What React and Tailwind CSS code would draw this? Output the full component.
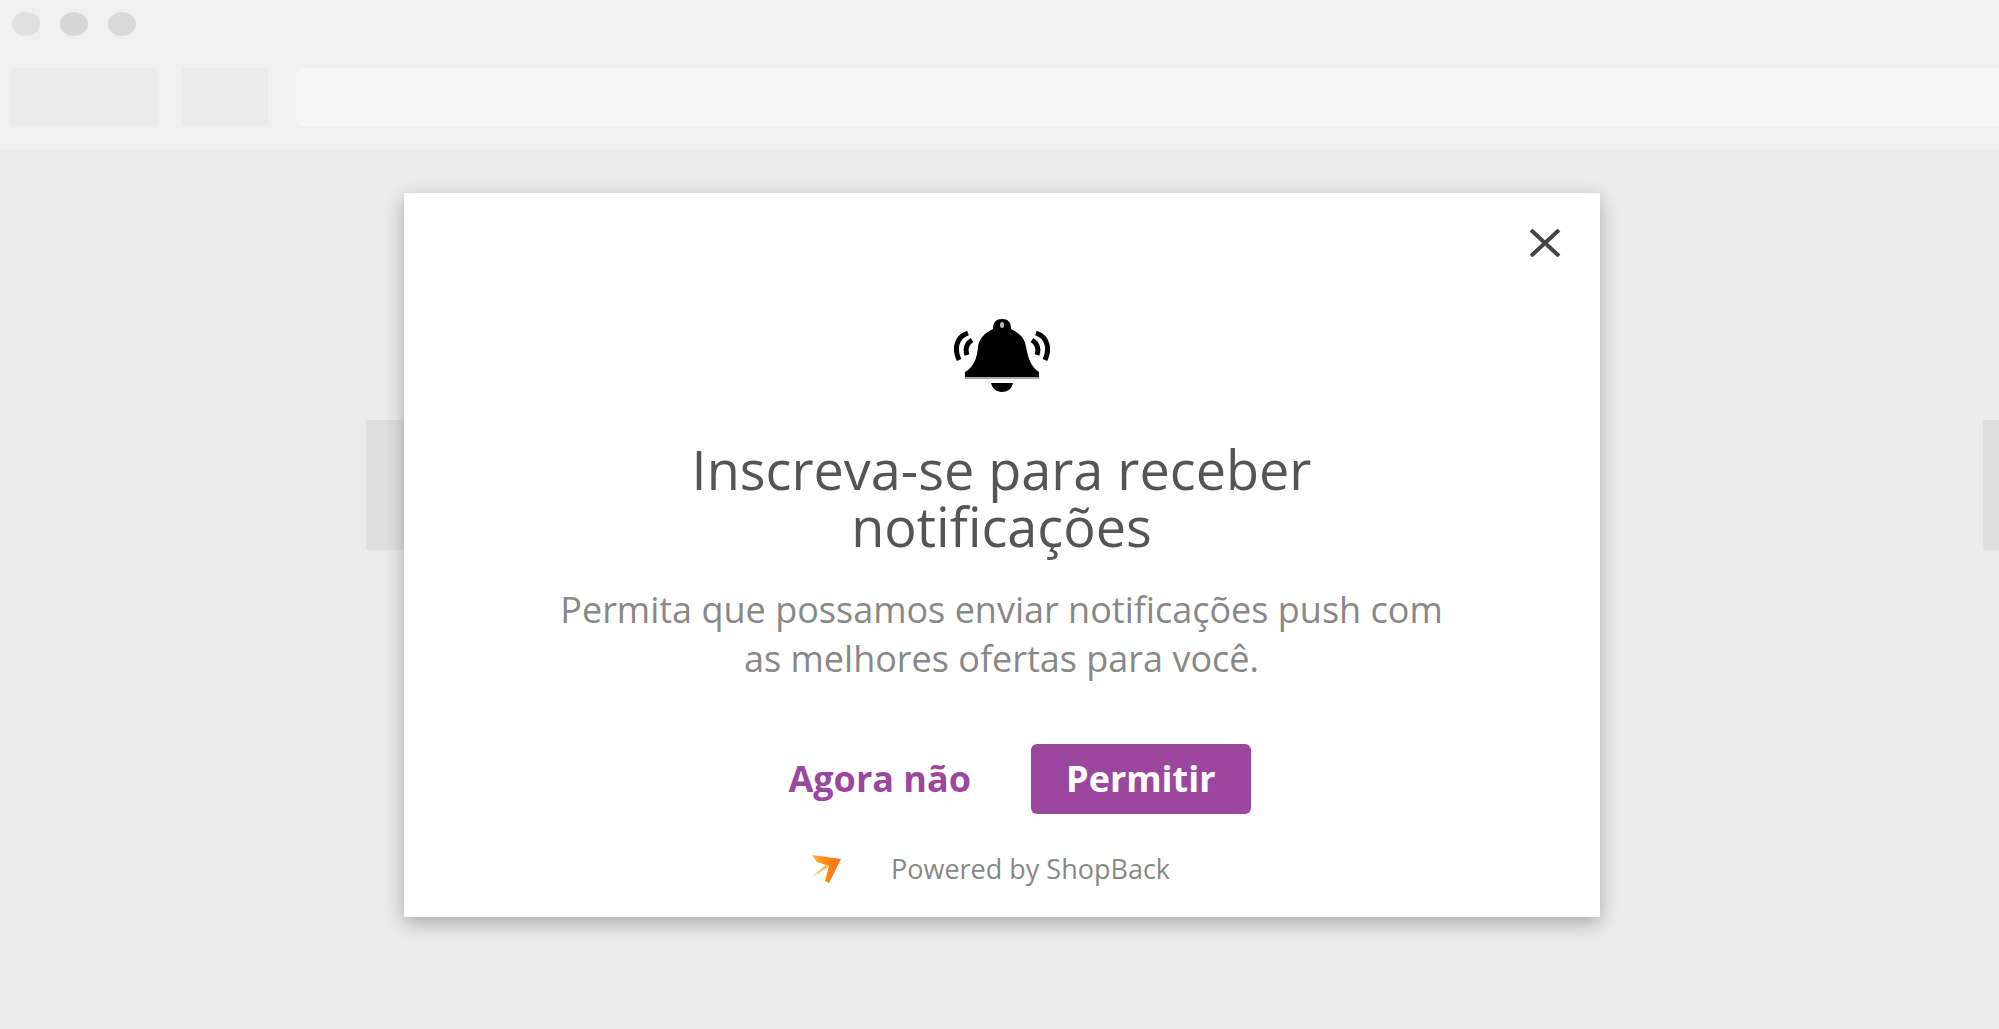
import React, { useState } from 'react';

const BellIcon = () => (
  <svg className="w-24 h-[74px]" viewBox="0 0 96 74" fill="none" aria-hidden="true">
    <path
      d="M11 59v-5c9-5 12-14 13-25 1-9 7-14 15-18 0-7 3-10 9-10s9 3 9 10c8 4 14 9 15 18 2 11 5 20 13 25v5z"
      fill="#000"
    />
    <ellipse cx="48" cy="7" rx="2" ry="3" fill="#bbb" />
    <path d="M11 60H85" stroke="#aaa" strokeWidth="2" />
    <path d="M37 65h22c-1 5-5 9-11 9s-10-4-11-9z" fill="#000" />
    <path d="M14 15C2 19 0 31 5 42M18 22c-6 4-7 9-5 15" stroke="#000" strokeWidth="5" />
    <path d="M82 15c12 4 14 16 9 27M78 22c6 4 7 9 5 15" stroke="#000" strokeWidth="5" />
  </svg>
);

const ShopBackLogo = () => (
  <svg className="w-8 h-8" viewBox="0 0 32 32" aria-hidden="true">
    <defs>
      <linearGradient id="wing" x1="0" y1="0" x2="1" y2="0">
        <stop offset="0" stopColor="#ffb347" />
        <stop offset="0.5" stopColor="#ff8a0c" />
        <stop offset="1" stopColor="#ff6a1f" />
      </linearGradient>
    </defs>
    <path d="M1 2l29 4-12 24-4-2 4-15-12-4z" fill="url(#wing)" />
    <path d="M1 24L14 12l4 2z" fill="#ffbe73" />
  </svg>
);

const BrowserBar = () => (
  <header className="h-[150px] bg-[#f0f0f0] pt-3">
    <div className="flex gap-5 pl-3">
      <span className="w-7 h-6 rounded-[50%] bg-[#e0e0e0]" />
      <span className="w-7 h-6 rounded-[50%] bg-[#d6d6d6]" />
      <span className="w-7 h-6 rounded-[50%] bg-[#d8d8d8]" />
    </div>
    <div className="flex mt-8 pl-[10px] h-[58px]">
      <span className="w-[148px] rounded bg-[#ebebeb]" />
      <span className="w-[86px] ml-6 rounded-xs bg-[#ebebeb]" />
      <span className="flex-1 ml-7 rounded-l-md bg-[#f7f7f7]" />
    </div>
  </header>
);

const PushPrompt = ({ onClose }) => (
  <section
    role="dialog"
    aria-labelledby="push-title"
    className="w-3/5 max-w-[1196px] bg-white pt-[25px] pb-8 flex flex-col items-center text-center shadow-[0_6px_18px_rgba(0,0,0,0.28)]"
  >
    <button
      type="button"
      aria-label="Fechar"
      onClick={onClose}
      className="self-end mr-[30px] size-[50px] flex items-center justify-center"
    >
      <svg className="w-8 h-7" viewBox="0 0 32 28" aria-hidden="true">
        <path d="M2 1l28 26M30 1L2 27" stroke="#444" strokeWidth="4" />
      </svg>
    </button>

    <div className="mt-[50px]">
      <BellIcon />
    </div>

    <h1 id="push-title" className="mt-[49px] max-w-[720px] text-[54px] leading-[57px] text-[#555]">
      Inscreva-se para receber notificações
    </h1>
    <p className="mt-[30px] max-w-[920px] text-[36px] leading-[49px] text-[#888]">
      Permita que possamos enviar notificações push com as melhores ofertas para você.
    </p>

    <div className="mt-[61px] flex gap-6 text-[36px] font-bold">
      <button type="button" onClick={onClose} className="h-[70px] px-9 text-[#9b479f]">
        Agora não
      </button>
      <button type="button" onClick={onClose} className="h-[70px] px-[35px] rounded-md bg-[#9b479f] text-white">
        Permitir
      </button>
    </div>

    <div className="mt-[39px] pr-[22px] flex items-center gap-12 text-[27px] leading-8 text-[#888]">
      <ShopBackLogo />
      <span>Powered by ShopBack</span>
    </div>
  </section>
);

const App = () => {
  const [isOpen, setIsOpen] = useState(true);

  return (
    <div className="min-h-screen bg-[#ebebeb] font-['Open_Sans',sans-serif]">
      <BrowserBar />
      <main className="relative">
        <div className="flex justify-between pt-[270px] pl-[366px]">
          <span className="w-1/2 h-[130px] bg-[#dfdfdf]" />
          <span className="w-4 h-[130px] bg-[#dfdfdf]" />
        </div>

        {isOpen && (
          <div className="absolute inset-x-0 top-[43px] flex justify-center pl-1">
            <PushPrompt onClose={() => setIsOpen(false)} />
          </div>
        )}
      </main>
    </div>
  );
};

export default App;
